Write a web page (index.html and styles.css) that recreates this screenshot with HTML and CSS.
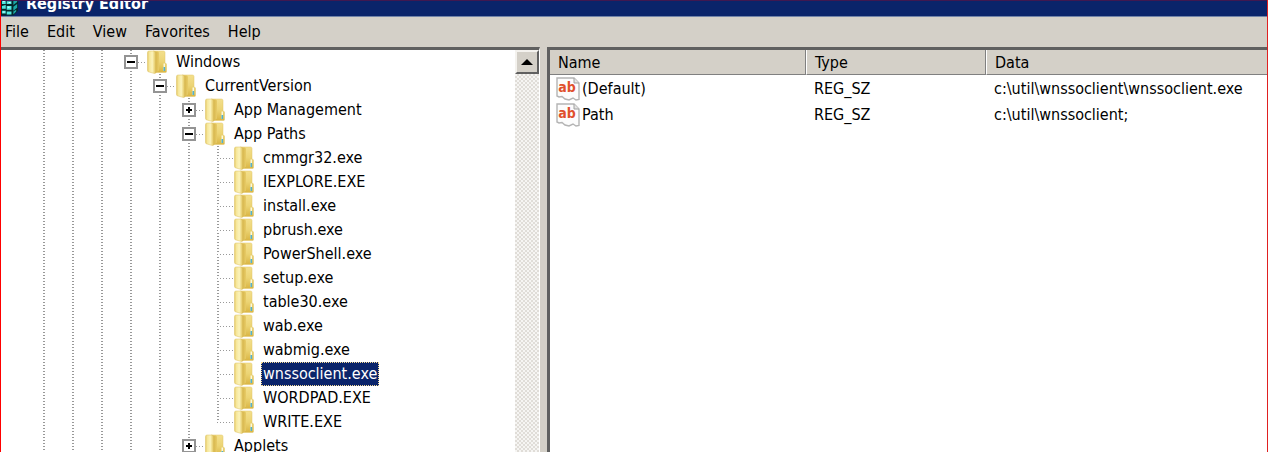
FILE: index.html
```html
<!DOCTYPE html>
<html lang="en">

<head>
    <meta charset="UTF-8">
    <meta name="viewport" content="width=device-width, initial-scale=1.0">
    <title>Registry Editor</title>
    <link rel="stylesheet" href="styles.css">
</head>

<body>
    <svg class="sprite" aria-hidden="true">
        <defs>
            <linearGradient id="cover" x1="0" x2="1">
                <stop offset="0" stop-color="#e6ca64" />
                <stop offset="0.25" stop-color="#f6e79c" />
                <stop offset="0.6" stop-color="#fbf3bb" />
                <stop offset="1" stop-color="#e3c65e" />
            </linearGradient>
            <linearGradient id="back" x1="0" x2="0" y1="0" y2="1">
                <stop offset="0" stop-color="#f3df8c" />
                <stop offset="0.5" stop-color="#ecd474" />
                <stop offset="1" stop-color="#d9b544" />
            </linearGradient>
            <linearGradient id="spine" x1="0" x2="1">
                <stop offset="0" stop-color="#cfac40" />
                <stop offset="1" stop-color="#e8cc68" />
            </linearGradient>
            <symbol id="folder" viewBox="0 0 20 24">
                <path d="M6 1h10.500q1.500 0 1.500 1.500v10l1.500 1.500v7.500q0 1-1 1H8z" fill="url(#back)" stroke="#e2c768" stroke-width="0.5" />
                <path d="M7 1.500h4q1 .5 1 1.500v17.500L8 23.500z" fill="url(#spine)" />
                <path d="M0.500 2.500q0-1.500 1.500-1.500h4.500q2 0 2 2v19.500q0 1-1 1L2 22q-1.500-.2-1.500-1.500z" fill="url(#cover)" stroke="#dcc063" stroke-width="0.5" />
                <path d="M16.500 13.500h1.600v7.500h-1.600z" fill="#fbf8dc" />
                <path d="M16.500 17h1.600v4h-1.600z" fill="#52b2cc" />
            </symbol>
            <symbol id="string-value" viewBox="0 0 24 24">
                <path d="M1 1h17l5 5v16.500l-3 .5-3-2-4 2-4-1-3-2.500-3 .5-2-1z" fill="#fcfcfc" stroke="#b4b4b4" stroke-width="1.400" />
                <path d="M18 1v5h5" fill="#e4e4e4" stroke="#a0a0a0" />
                <text x="11" y="15" text-anchor="middle" class="glyph">ab</text>
            </symbol>
            <symbol id="plus" viewBox="0 0 10 10">
                <path d="M2 4h6v2H2zM4 2h2v6H4z" />
            </symbol>
            <symbol id="minus" viewBox="0 0 10 10">
                <path d="M1 4h8v2H1z" />
            </symbol>
        </defs>
    </svg>

    <div class="window">
        <header class="title-bar">
            <svg class="app-icon" viewBox="0 0 20 24" aria-hidden="true">
                <path d="M0 2h14l4-2v19l-5 5H0z" fill="#04282c" />
                <path d="M1 8l4-1v5H1zM6 9h5v3H6zM1 14l4-1v4H1zM6 14h5v4H6zM1 19h4v3H1zM6 20h5v3H6z" fill="#4fe8e0" />
                <path d="M13 9l4-3v4l-4 3zM13 15l4-3v4l-4 3zM13 20l3-2v2l-3 3z" fill="#1ca8a8" />
                <path d="M2 9h2v1H2zM7 15h2v1H7zM8 10h2v1H8zM2 20h2v1H2z" fill="#e0ffff" />
            </svg>
            <h1>Registry Editor</h1>
        </header>

        <nav class="menu-bar">
            <button type="button">File</button>
            <button type="button">Edit</button>
            <button type="button">View</button>
            <button type="button">Favorites</button>
            <button type="button">Help</button>
        </nav>

        <main class="panes">
            <section class="tree-pane" aria-label="Keys">
                <div class="guides">
                    <span></span>
                    <span></span>
                    <span></span>
                </div>
                <ul class="tree">
                    <li>
                        <div class="node">
                            <button type="button" class="toggle" aria-label="Collapse Windows"><svg><use href="#minus" /></svg></button>
                            <svg class="folder"><use href="#folder" /></svg>
                            <span class="label">Windows</span>
                        </div>
                        <ul>
                            <li>
                                <div class="node">
                                    <button type="button" class="toggle" aria-label="Collapse CurrentVersion"><svg><use href="#minus" /></svg></button>
                                    <svg class="folder"><use href="#folder" /></svg>
                                    <span class="label">CurrentVersion</span>
                                </div>
                                <ul>
                                    <li>
                                        <div class="node">
                                            <button type="button" class="toggle" aria-label="Expand App Management"><svg><use href="#plus" /></svg></button>
                                            <svg class="folder"><use href="#folder" /></svg>
                                            <span class="label">App Management</span>
                                        </div>
                                    </li>
                                    <li>
                                        <div class="node">
                                            <button type="button" class="toggle" aria-label="Collapse App Paths"><svg><use href="#minus" /></svg></button>
                                            <svg class="folder"><use href="#folder" /></svg>
                                            <span class="label">App Paths</span>
                                        </div>
                                        <ul class="leaves">
                                            <li class="node"><svg class="folder"><use href="#folder" /></svg><span class="label">cmmgr32.exe</span></li>
                                            <li class="node"><svg class="folder"><use href="#folder" /></svg><span class="label">IEXPLORE.EXE</span></li>
                                            <li class="node"><svg class="folder"><use href="#folder" /></svg><span class="label">install.exe</span></li>
                                            <li class="node"><svg class="folder"><use href="#folder" /></svg><span class="label">pbrush.exe</span></li>
                                            <li class="node"><svg class="folder"><use href="#folder" /></svg><span class="label">PowerShell.exe</span></li>
                                            <li class="node"><svg class="folder"><use href="#folder" /></svg><span class="label">setup.exe</span></li>
                                            <li class="node"><svg class="folder"><use href="#folder" /></svg><span class="label">table30.exe</span></li>
                                            <li class="node"><svg class="folder"><use href="#folder" /></svg><span class="label">wab.exe</span></li>
                                            <li class="node"><svg class="folder"><use href="#folder" /></svg><span class="label">wabmig.exe</span></li>
                                            <li class="node"><svg class="folder"><use href="#folder" /></svg><span class="label selected">wnssoclient.exe</span></li>
                                            <li class="node"><svg class="folder"><use href="#folder" /></svg><span class="label">WORDPAD.EXE</span></li>
                                            <li class="node"><svg class="folder"><use href="#folder" /></svg><span class="label">WRITE.EXE</span></li>
                                        </ul>
                                    </li>
                                    <li>
                                        <div class="node">
                                            <button type="button" class="toggle" aria-label="Expand Applets"><svg><use href="#plus" /></svg></button>
                                            <svg class="folder"><use href="#folder" /></svg>
                                            <span class="label">Applets</span>
                                        </div>
                                    </li>
                                </ul>
                            </li>
                        </ul>
                    </li>
                </ul>
                <div class="scrollbar">
                    <button type="button" aria-label="Scroll up">
                        <svg viewBox="0 0 12 6"><path d="M6 0l6 6H0z" /></svg>
                    </button>
                </div>
            </section>

            <section class="value-pane" aria-label="Values">
                <table>
                    <thead>
                        <tr>
                            <th class="col-name">Name</th>
                            <th class="col-type">Type</th>
                            <th>Data</th>
                        </tr>
                    </thead>
                    <tbody>
                        <tr>
                            <td><div class="value-name"><svg><use href="#string-value" /></svg>(Default)</div></td>
                            <td>REG_SZ</td>
                            <td>c:\util\wnssoclient\wnssoclient.exe</td>
                        </tr>
                        <tr>
                            <td><div class="value-name"><svg><use href="#string-value" /></svg>Path</div></td>
                            <td>REG_SZ</td>
                            <td>c:\util\wnssoclient;</td>
                        </tr>
                    </tbody>
                </table>
            </section>
        </main>
    </div>
</body>

</html>
```
FILE: styles.css
```css
* {
    box-sizing: border-box;
}

body {
    margin: 0;
    font-family: Tahoma, 'DejaVu Sans Condensed', 'DejaVu Sans', sans-serif;
    font-size: 16px;
    line-height: 24px;
    color: #000;
}

button {
    font: inherit;
    color: inherit;
    padding: 0;
    border: none;
    background: none;
}

svg {
    display: block;
    flex: none;
}

.sprite {
    position: absolute;
    width: 0;
    height: 0;
}

.window {
    display: flex;
    flex-direction: column;
    height: 100vh;
    overflow: hidden;
    background-color: #d4d0c8;
    border-left: 1px solid #f00;
    border-right: 1px solid #e02020;
}

/* Title bar */
.title-bar {
    display: flex;
    flex: none;
    align-items: flex-end;
    gap: 6px;
    height: 17px;
    overflow: hidden;
    color: #fff;
    background-color: #0a246a;
    border-top: 1px solid #401850;
    border-bottom: 1px solid #7083a8;
}

.title-bar h1 {
    margin: 0;
    font-size: 16px;
    line-height: 24px;
}

.app-icon {
    width: 19px;
    height: 24px;
}

/* Menu */
.menu-bar {
    display: flex;
    flex: none;
    gap: 18px;
    padding: 3px 4px;
}

/* Panes */
.panes {
    display: flex;
    flex: 1;
    min-height: 0;
}

.tree-pane {
    display: flex;
    flex: none;
    width: 539px;
    margin-right: 7px;
    padding-left: 42px;
    overflow: hidden;
    background-color: #fff;
    border-top: 3px solid #606060;
    border-right: 1px solid #fff;
}

.guides {
    display: flex;
}

.guides span {
    width: 29px;
}

.guides span,
.tree,
.tree ul {
    background: repeating-linear-gradient(#999 0 1px, #fff 1px 3px) 0 0 / 2px 100% no-repeat;
}

.guides span:last-child {
    width: 23px;
}

ul {
    margin: 0;
    padding: 0;
    list-style: none;
}

.tree {
    flex: 1;
}

.tree,
.tree ul {
    background-position: 6px 0;
}

.tree ul {
    margin-left: 29px;
}

.tree .leaves {
    background-size: 2px calc(100% - 12px);
}

.node {
    display: flex;
    align-items: center;
    height: 24px;
}

/* dotted connector between the guide and the folder */
.node::before {
    content: '';
    order: 1;
    width: 9px;
    height: 1px;
    background: repeating-linear-gradient(90deg, #999 0 1px, #fff 1px 3px);
}

.leaves .node::before {
    width: 17px;
    margin-left: 6px;
}

.toggle {
    width: 14px;
    height: 14px;
    background-color: #fff;
    border: 2px solid #949494;
}

.toggle svg {
    width: 10px;
    height: 10px;
}

.folder {
    order: 2;
    width: 20px;
    height: 24px;
}

.label {
    order: 3;
    margin-left: 7px;
    padding: 0 2px;
    white-space: nowrap;
}

.selected {
    color: #fff;
    background-color: #0a246a;
    outline: 1px dotted #f5db95;
    outline-offset: -1px;
}

.scrollbar {
    width: 24px;
    background: repeating-conic-gradient(#e0ddd8 0 25%, #f6f5f3 0 50%) 0 0 / 4px 4px;
}

.scrollbar button {
    display: flex;
    align-items: center;
    justify-content: center;
    width: 24px;
    height: 24px;
    background-color: #d4d0c8;
    border: 2px solid;
    border-color: #f4f2ee #606060 #606060 #f4f2ee;
}

.scrollbar svg {
    width: 12px;
    height: 6px;
}

/* Value list */
.value-pane {
    flex: 1;
    min-width: 0;
    overflow: hidden;
    background-color: #fff;
    border-top: 3px solid #606060;
    border-left: 3px solid #606060;
}

table {
    width: 100%;
    table-layout: fixed;
    border-collapse: separate;
    border-spacing: 0;
}

th {
    height: 24px;
    padding: 2px 8px 0;
    font-weight: normal;
    line-height: 22px;
    text-align: left;
    background-color: #d4d0c8;
    border-right: 1px solid #808080;
    border-bottom: 1px solid #808080;
    border-left: 1px solid #fff;
}

th:first-child {
    border-left: none;
}

th:last-child {
    border-right: none;
}

.col-name {
    width: 256px;
}

.col-type {
    width: 180px;
}

td {
    height: 26px;
    padding: 1px 8px 0;
    line-height: 24px;
    white-space: nowrap;
}

td:first-child {
    padding-left: 6px;
}

.value-name {
    display: flex;
    align-items: center;
    gap: 2px;
}

.value-name svg {
    width: 24px;
    height: 24px;
}

.glyph {
    font-family: 'DejaVu Sans Condensed', 'DejaVu Sans', sans-serif;
    font-size: 14px;
    font-weight: bold;
    fill: #e0502c;
}
```
